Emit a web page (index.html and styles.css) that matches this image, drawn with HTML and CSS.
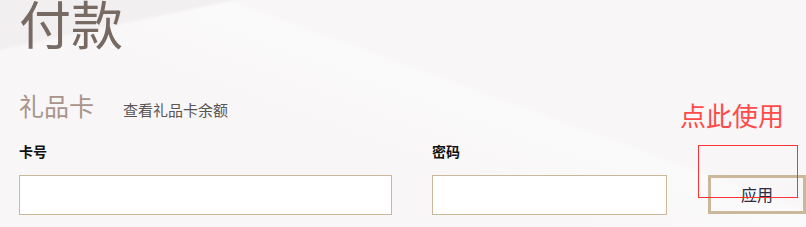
FILE: index.html
```html
<!DOCTYPE html>
<html>
<head>
<meta charset="utf-8">
<title>付款</title>
<link rel="stylesheet" href="styles.css">
</head>
<body>
<div class="pago">
  <h1 class="pago__titulo">付款</h1>
  <div class="tarjeta__cabecera">
    <h2 class="tarjeta__titulo">礼品卡</h2>
    <a class="tarjeta__saldo" href="#">查看礼品卡余额</a>
  </div>
  <div class="tarjeta__form">
    <div class="campo campo--numero">
      <label class="campo__label">卡号</label>
      <input class="campo__input" type="text">
    </div>
    <div class="campo campo--clave">
      <label class="campo__label">密码</label>
      <input class="campo__input" type="password">
    </div>
    <div class="campo campo--boton">
      <button class="boton-aplicar">应用</button>
    </div>
  </div>
  <div class="nota">点此使用</div>
  <div class="nota__marco"></div>
</div>
</body>
</html>
```

FILE: styles.css
```css
html {
  font-family: "Noto Sans CJK SC", "Noto Sans", sans-serif;
}

body {
  margin: 0;
  height: 227px;
  overflow: hidden;
  background-color: #f8f6f7;
  background-image: linear-gradient(168deg, #f1efef 0, #f1efef 12%, rgba(248,246,247,0) 13%),
    linear-gradient(200deg, rgba(255,255,255,0) 40%, #fbfafa 41%, rgba(255,255,255,0) 60%);
}

.pago {
  position: relative;
  padding: 0 0 0 19px;
}

.pago__titulo {
  margin: -3px 0 0;
  font-size: 52px;
  font-weight: normal;
  line-height: 1;
  color: #776a62;
}

.tarjeta__cabecera {
  display: flex;
  align-items: baseline;
  margin-top: 41px;
  height: 30px;
}

.tarjeta__titulo {
  margin: 0;
  font-size: 25px;
  font-weight: normal;
  line-height: 30px;
  color: #a8948a;
}

.tarjeta__saldo {
  margin-left: 29px;
  font-size: 15px;
  color: #5a5552;
  text-decoration: none;
}

.tarjeta__form {
  display: flex;
  margin-top: 21px;
}

.campo {
  display: flex;
  flex-direction: column;
  flex-shrink: 0;
}

.campo--numero {
  width: 373px;
}

.campo--clave {
  width: 235px;
  margin-left: 40px;
}

.campo--boton {
  margin-left: 41px;
  justify-content: flex-end;
}

.campo__label {
  font-size: 14px;
  font-weight: bold;
  line-height: 20px;
  color: #111;
  margin-bottom: 14px;
}

.campo__input {
  box-sizing: border-box;
  height: 40px;
  border: 1px solid #cbb89a;
  background: #fff;
  margin: 0;
}

.boton-aplicar {
  box-sizing: border-box;
  width: 98px;
  height: 39px;
  border: 3px solid #cbb89a;
  background: transparent;
  font-family: inherit;
  font-size: 16px;
  color: #2b2b45;
  padding: 0 0 2px;
  margin-bottom: 1px;
}

.nota {
  position: absolute;
  left: 680px;
  top: 100px;
  font-size: 26px;
  line-height: 36px;
  color: #ff4a4a;
}

.nota__marco {
  position: absolute;
  left: 698px;
  top: 148px;
  width: 98px;
  height: 51px;
  border: 1px solid #ff3333;
}
```
